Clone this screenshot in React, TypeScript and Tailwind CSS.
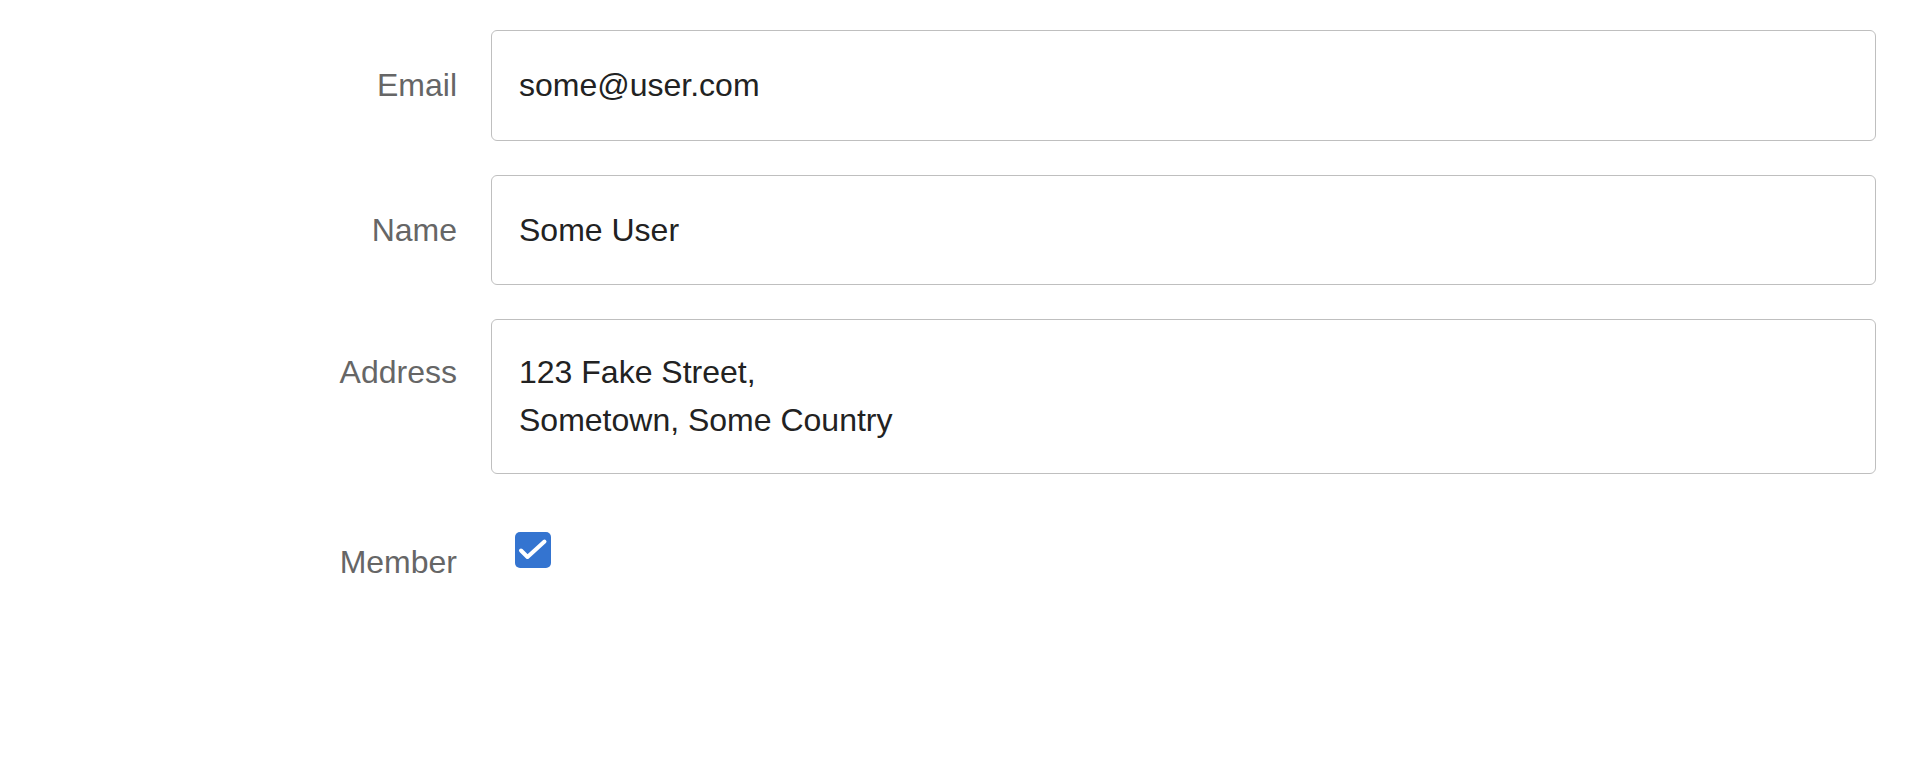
import { useState } from 'react'

const font = { fontFamily: '"Liberation Sans", Arial, Helvetica, sans-serif' }

function Row({ label, labelPad, children }: { label: string; labelPad: string; children: React.ReactNode }) {
  return (
    <div className="flex items-start gap-[34px]">
      <label className={`w-[457px] shrink-0 text-right text-[32px] leading-[48px] text-[#666666] ${labelPad}`}>
        {label}
      </label>
      <div className="flex-1">{children}</div>
    </div>
  )
}

export default function App() {
  const [email, setEmail] = useState('some@user.com')
  const [name, setName] = useState('Some User')
  const [address, setAddress] = useState('123 Fake Street,\nSometown, Some Country')
  const [member, setMember] = useState(true)

  return (
    <div className="min-h-[760px] w-full bg-white" style={font}>
      <form className="flex flex-col gap-[34px] pt-[30px] pr-[30px]">
        <Row label="Email" labelPad="pt-[31px]">
          <input
            value={email}
            onChange={(e) => setEmail(e.target.value)}
            className="block h-[111px] w-full rounded-[6px] border-[1.5px] border-[#bfbfbf] px-[27px] text-[32px] text-[#222222] outline-none"
            style={font}
          />
        </Row>
        <Row label="Name" labelPad="pt-[31px]">
          <input
            value={name}
            onChange={(e) => setName(e.target.value)}
            className="block h-[110px] w-full rounded-[6px] border-[1.5px] border-[#bfbfbf] px-[27px] text-[32px] text-[#222222] outline-none"
            style={font}
          />
        </Row>
        <Row label="Address" labelPad="pt-[29px]">
          <textarea
            value={address}
            onChange={(e) => setAddress(e.target.value)}
            className="block h-[155px] w-full resize-none rounded-[6px] border-[1.5px] border-[#bfbfbf] px-[27px] pt-[28px] pb-[29px] text-[32px] leading-[48px] text-[#222222] outline-none"
            style={font}
          />
        </Row>
        <Row label="Member" labelPad="pt-[30px]">
          <button
            type="button"
            onClick={() => setMember(!member)}
            className={`mt-[24px] ml-[24px] flex h-[36px] w-[36px] items-center justify-center rounded-[5px] ${
              member ? 'bg-[#3474d0]' : 'border border-[#bfbfbf] bg-white'
            }`}
          >
            {member && (
              <svg width="36" height="36" viewBox="0 0 36 36" fill="none">
                <path d="M6 18.5 L12.5 25 L29.5 9.5" stroke="white" strokeWidth="4" strokeLinecap="round" strokeLinejoin="round" />
              </svg>
            )}
          </button>
        </Row>
      </form>
    </div>
  )
}
